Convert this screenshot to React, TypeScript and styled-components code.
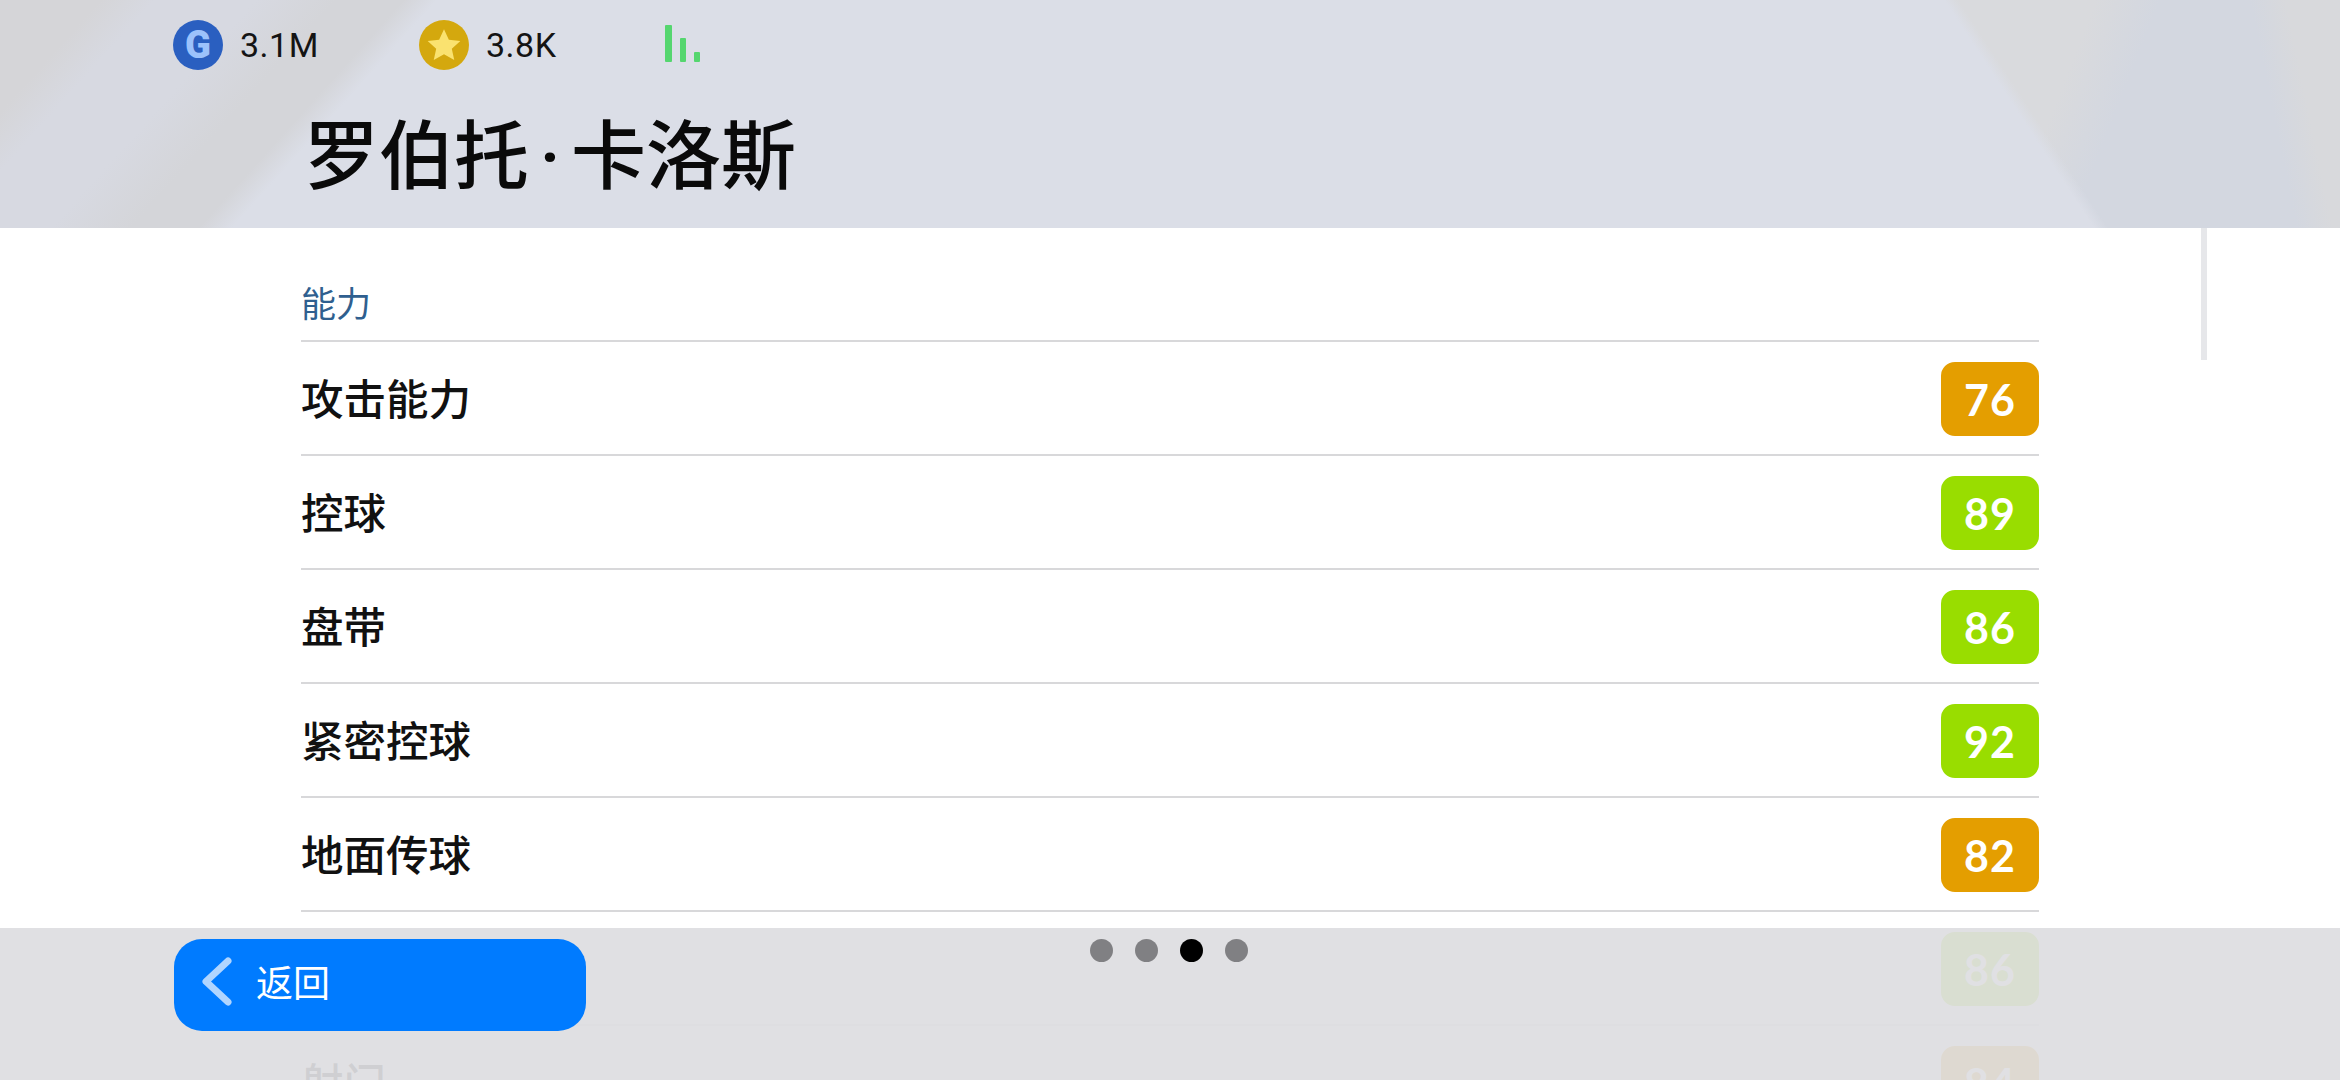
import React from 'react';
import styled, { createGlobalStyle } from 'styled-components';

const GlobalStyle = createGlobalStyle`
  html, body {
    margin: 0;
    padding: 0;
    background: #fff;
  }
  * {
    box-sizing: border-box;
  }
`;

const CJK = `'Noto Sans CJK SC', 'Noto Sans', sans-serif`;

const Screen = styled.div`
  position: relative;
  display: flex;
  flex-direction: column;
  width: 2340px;
  height: 1080px;
  overflow: hidden;
  font-family: ${CJK};
  color: #111;
  background: #fff;
`;

const Header = styled.header`
  flex: none;
  height: 228px;
  padding-top: 20px;
  background-color: #d3d7e0;
  background-image:
    linear-gradient(132deg, #d5d5d8 0, #d5d5d8 75px, #d7d9e1 115px, #d7d9e1 190px, #d4d5d9 250px, #d4d5d9 300px, #dbdee7 325px, transparent 325px),
    linear-gradient(78.4deg, transparent 2250px, #d8d9dc 2285px),
    linear-gradient(56.7deg, #dbdee7 1750px, transparent 1762px),
    linear-gradient(111.5deg, #d9dadd 1950px, transparent 2010px);
`;

const Wallet = styled.div`
  display: grid;
  grid-template-columns: repeat(3, 246px);
  padding-left: 173px;
`;

const WalletItem = styled.div`
  display: flex;
  align-items: center;
  gap: 17px;
  height: 50px;
`;

const Coin = styled.span<{ $bg: string; $fg: string }>`
  display: flex;
  align-items: center;
  justify-content: center;
  width: 50px;
  height: 50px;
  border-radius: 50%;
  background: ${(p) => p.$bg};
  color: ${(p) => p.$fg};
  font-family: Roboto, sans-serif;
  font-weight: 900;
  font-size: 38px;
`;

const Amount = styled.span`
  font-family: Roboto, sans-serif;
  font-size: 34px;
  letter-spacing: 0.5px;
  color: #141414;
`;

const Title = styled.h1`
  margin: 31px 0 0;
  padding-left: 304px;
  font-size: 75px;
  line-height: 100px;
  font-weight: 500;
  color: #0a0a0a;
`;

const TitleDot = styled.span`
  display: inline-block;
  width: 42px;
  text-align: center;
  font-family: Roboto, sans-serif;
`;

const Panel = styled.main`
  position: relative;
  flex: 1;
  min-height: 0;
  padding: 0 301px;
  background: #fff;
`;

const ScrollThumb = styled.div`
  position: absolute;
  top: 0;
  right: 133px;
  width: 6px;
  height: 132px;
  background: #e6e7ea;
`;

const SectionTitle = styled.div`
  display: flex;
  align-items: flex-end;
  height: 114px;
  padding-bottom: 13px;
  border-bottom: 2px solid #d8d8da;
  font-size: 35px;
  line-height: 50px;
  color: #2f5f8f;
`;

const Row = styled.div`
  display: flex;
  align-items: center;
  justify-content: space-between;
  height: 114px;
  padding-top: 2px;
  border-bottom: 2px solid #d8d8da;
`;

const RowLabel = styled.span`
  margin-bottom: 5px;
  font-size: 42.5px;
  font-weight: 500;
`;

const Badge = styled.span<{ $color: string }>`
  display: flex;
  align-items: center;
  justify-content: center;
  width: 98px;
  height: 74px;
  border-radius: 14px;
  background: ${(p) => p.$color};
  color: #fff;
  font-family: Lato, sans-serif;
  font-weight: 700;
  font-size: 43px;
  letter-spacing: 1px;
`;

const Footer = styled.footer`
  position: absolute;
  left: 0;
  right: 0;
  bottom: 0;
  display: grid;
  grid-template-columns: 1fr auto 1fr;
  align-items: start;
  height: 152px;
  padding: 11px 174px 0;
  background: rgba(222, 222, 225, 0.93);
`;

const BackButton = styled.button`
  display: flex;
  align-items: center;
  gap: 24px;
  width: 412px;
  height: 92px;
  padding: 0 0 8px 28px;
  border: 0;
  border-radius: 28px;
  background: #007bff;
  color: #fff;
  font-family: ${CJK};
  font-size: 37px;
  font-weight: 400;
`;

const Dots = styled.div`
  display: flex;
  gap: 22px;
  margin-left: -3px;
`;

const Dot = styled.span<{ $active?: boolean }>`
  width: 23px;
  height: 23px;
  border-radius: 50%;
  background: ${(p) => (p.$active ? '#000' : '#808083')};
`;

const GREEN = '#99dd00';
const ORANGE = '#e49e00';

const stats = [
  { name: '攻击能力', value: 76, color: ORANGE },
  { name: '控球', value: 89, color: GREEN },
  { name: '盘带', value: 86, color: GREEN },
  { name: '紧密控球', value: 92, color: GREEN },
  { name: '地面传球', value: 82, color: ORANGE },
  { name: '', value: 86, color: GREEN },
  { name: '射门', value: 84, color: ORANGE },
];

const StarCoin = () => (
  <Coin $bg="#d4a80e" $fg="#f8df6e">
    <svg width="38" height="38" viewBox="0 0 36 36">
      <path d="M18 3l4.600 10 10.900 1.200-8.100 7.300 2.300 10.700L18 26.700l-9.700 5.500 2.300-10.700-8.100-7.300L13.400 13z" fill="#fae26f" />
    </svg>
  </Coin>
);

const SignalBars = () => (
  <svg width="35" height="50" viewBox="0 0 35 50">
    <rect x="0" y="5" width="7" height="37" rx="1" fill="#55d66f" />
    <rect x="15" y="18" width="6" height="24" rx="1" fill="#55d66f" />
    <rect x="29" y="32" width="6" height="10" rx="1" fill="#55d66f" />
  </svg>
);

const Chevron = () => (
  <svg width="30" height="49" viewBox="0 0 30 49" fill="none">
    <path d="M26 4L4 24.500 26 45" stroke="#b0d5ff" strokeWidth="7" strokeLinecap="round" strokeLinejoin="round" />
  </svg>
);

const App: React.FC = () => {
  return (
    <Screen>
      <GlobalStyle />
      <Header>
        <Wallet>
          <WalletItem>
            <Coin $bg="#2a5fc0" $fg="#9cc2fb">G</Coin>
            <Amount>3.1M</Amount>
          </WalletItem>
          <WalletItem>
            <StarCoin />
            <Amount>3.8K</Amount>
          </WalletItem>
          <WalletItem>
            <SignalBars />
          </WalletItem>
        </Wallet>
        <Title>
          罗伯托<TitleDot>·</TitleDot>卡洛斯
        </Title>
      </Header>
      <Panel>
        <ScrollThumb />
        <SectionTitle>能力</SectionTitle>
        {stats.map((s, i) => (
          <Row key={i}>
            <RowLabel>{s.name}</RowLabel>
            <Badge $color={s.color}>{s.value}</Badge>
          </Row>
        ))}
      </Panel>
      <Footer>
        <BackButton>
          <Chevron />
          返回
        </BackButton>
        <Dots>
          <Dot />
          <Dot />
          <Dot $active />
          <Dot />
        </Dots>
      </Footer>
    </Screen>
  );
};

export default App;
